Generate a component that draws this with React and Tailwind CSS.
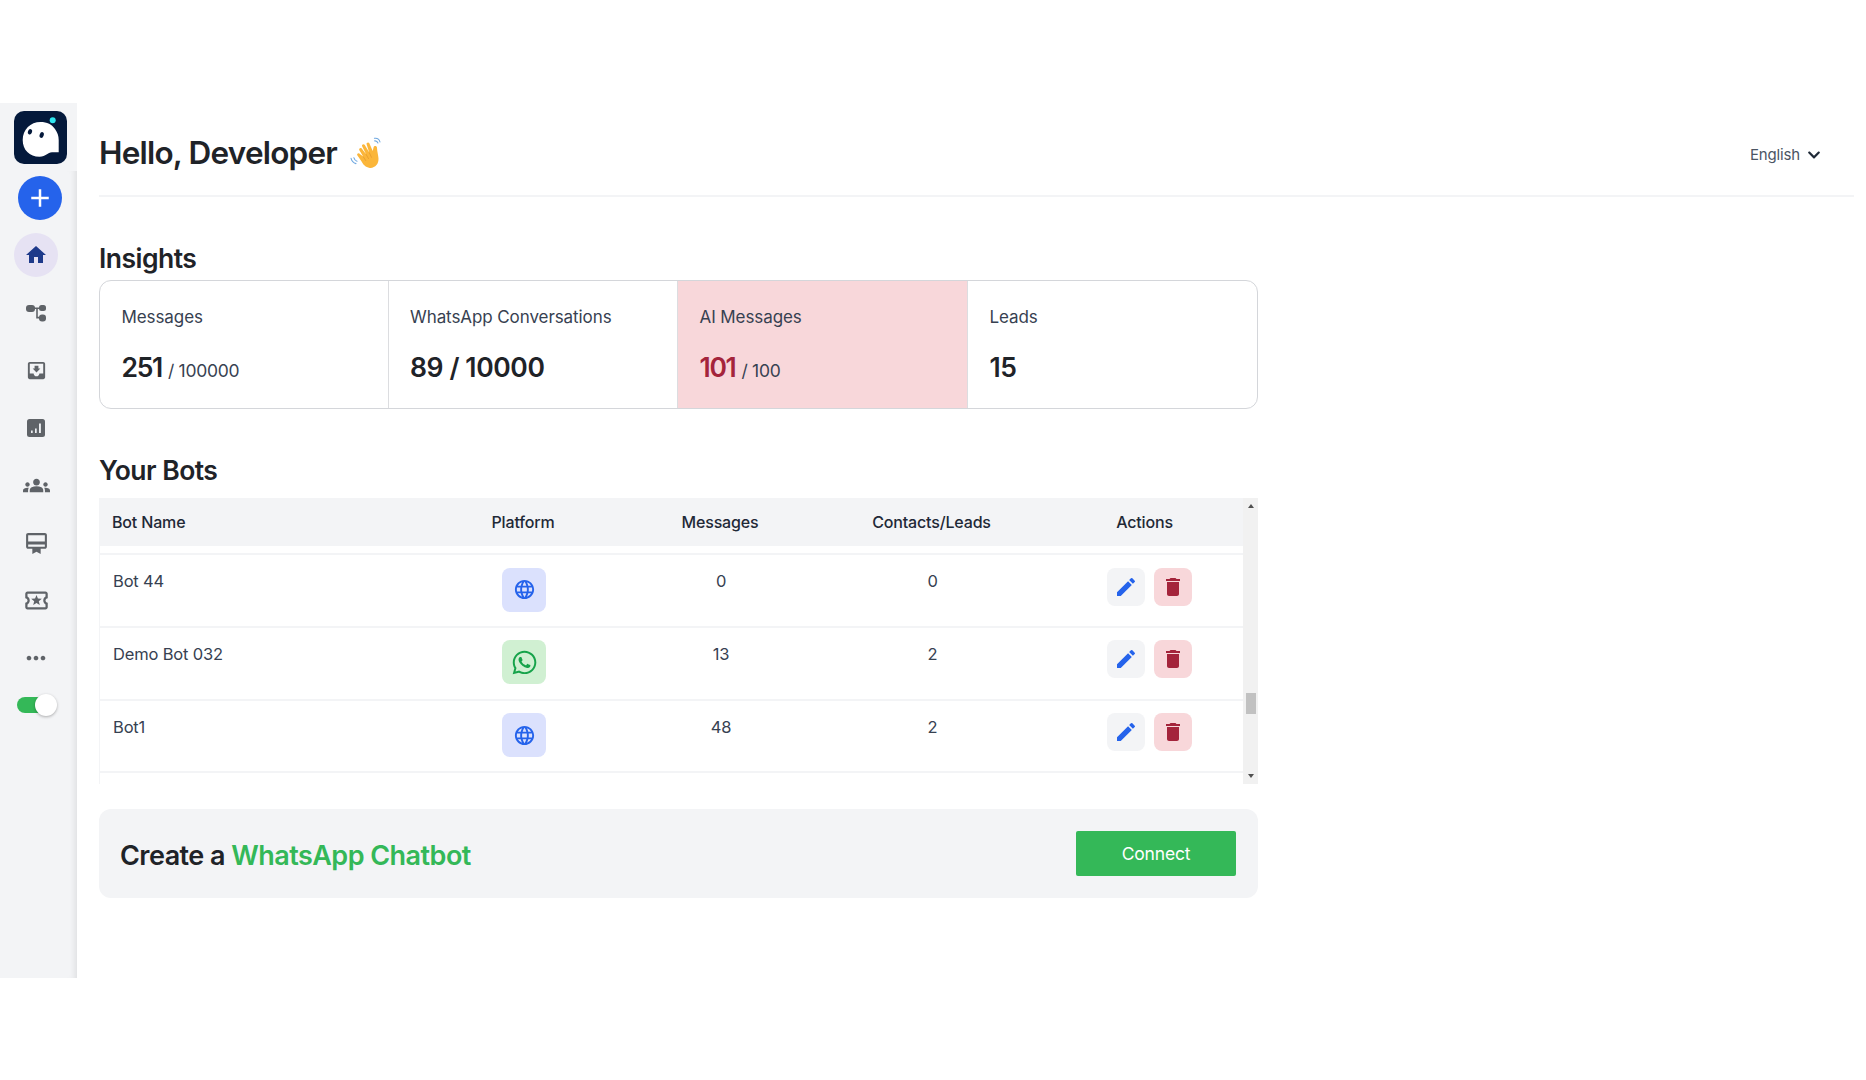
import React from "react";
import { MdHome, MdMoveToInbox, MdGroups, MdCardMembership, MdOutlineLocalActivity, MdMoreHoriz, MdEdit, MdDelete, MdLanguage, MdAdd } from "react-icons/md";
import { FaWhatsapp, FaChevronDown } from "react-icons/fa";

function TreeIcon() {
  return (
    <svg viewBox="0 0 20 18" className="w-[20px] h-[18px] block" fill="#5f6368">
      <rect x="0" y="1" width="9" height="7" rx="3" />
      <rect x="13" y="1" width="7" height="6" rx="2.5" />
      <rect x="13" y="10.5" width="7" height="7" rx="3" />
      <path d="M8 3.4h6v1.6h-6zM10.2 4h1.6v10h-1.6zM10.2 12.8h4v1.6h-4z" />
    </svg>
  );
}

function ChartIcon() {
  return (
    <svg viewBox="0 0 18 18" className="w-[18px] h-[18px] block">
      <rect width="18" height="18" rx="2.5" fill="#5f6368" />
      <rect x="4" y="11.5" width="1.7" height="2.5" fill="#eceef1" />
      <rect x="8" y="9.5" width="1.7" height="4.5" fill="#eceef1" />
      <rect x="12" y="4.5" width="1.9" height="9.5" fill="#eceef1" />
    </svg>
  );
}

const navIcons = [
  <TreeIcon />,
  <MdMoveToInbox className="text-[#5f6368]" size={23} />,
  <ChartIcon />,
  <MdGroups className="text-[#5f6368]" size={27} />,
  <MdCardMembership className="text-[#5f6368]" size={25} />,
  <MdOutlineLocalActivity className="text-[#5f6368]" size={27} />,
  <MdMoreHoriz className="text-[#5f6368]" size={28} />,
];

function Logo() {
  return (
    <svg viewBox="0 0 53 53" className="w-[53px] h-[53px] block">
      <rect width="53" height="53" rx="10" fill="#04193b" />
      <path d="M8.7 29C8.7 18.5 16.5 11 26.5 11C33 11 38 13.5 41 18C43.5 21.5 44.7 25 44.7 29V41.3H38C33.5 41.3 32 45.7 25.5 45.7C15.5 45.7 8.7 39 8.7 29Z" fill="#fff" />
      <ellipse cx="16" cy="20.8" rx="2" ry="2.8" transform="rotate(20 16 20.8)" fill="#04193b" />
      <ellipse cx="27.7" cy="24" rx="2" ry="3" transform="rotate(20 27.7 24)" fill="#04193b" />
      <circle cx="38.7" cy="9.3" r="3" fill="#2ee6f0" />
    </svg>
  );
}

function Wave() {
  return (
    <svg viewBox="0 0 32 32" className="w-[34px] h-[34px] block">
      <g fill="none" stroke="#6fa8e0" strokeWidth="1" strokeLinecap="round">
        <path d="M23 2.2C25.5 1.8 27.5 3.2 28.2 5.6" />
        <path d="M23.2 4.6C24.8 4.4 25.8 5.2 26.3 6.6" />
        <path d="M1 21C1.6 23.5 3.2 25.2 5.6 26" />
        <path d="M3.6 20.4C4 22 5 23.2 6.6 23.8" />
      </g>
      <path fill="#fbb63a" d="M7 18.4C6 17.2 7.6 15.6 9 16.6L12.4 19.4L8.8 13.4C8 12 9.8 10.6 11 11.8L15 17L11.4 9.6C10.8 8 12.8 7 13.8 8.2L18 15.4L15.6 7.8C15.2 6.2 17.4 5.4 18.2 6.8L21.4 14.2L22.2 10.6C22.6 8.8 25.4 9 25.4 11C25.6 15 26.6 17.6 26.8 21C27.2 26.4 23.6 30.4 18.6 30C14.6 29.6 12.4 27 10.6 23.6Z" />
      <path fill="none" stroke="#e0932a" strokeWidth="0.6" d="M15 17L17.6 21.6M18 15.4L20.4 20.4M12.4 19.4L15 23.4" />
    </svg>
  );
}

function Card({ label, value, sub, red, last, width }) {
  return (
    <div className={`${width} pl-[21.5px] pt-[23px] ${red ? "bg-[#f8d7da]" : ""} ${last ? "" : "border-r border-[#dcdde0]"}`}>
      <div className="text-[17px] leading-[26px] text-[#374151] tracking-[-0.005em]">{label}</div>
      <div className="mt-[19px] h-[36px] flex items-baseline">
        <span className={`text-[26.5px] leading-[36px] font-semibold ${sub ? "tracking-[-0.05em]" : "tracking-[-0.015em]"} ${red ? "text-[#a4243b]" : "text-[#1f2328]"}`}>{value}</span>
        {sub && <span className="ml-[6px] text-[17.5px] text-[#374151] tracking-[-0.015em]">{sub}</span>}
      </div>
    </div>
  );
}

const rows = [
  { name: "Bot 44", wa: false, m: "0", c: "0" },
  { name: "Demo Bot 032", wa: true, m: "13", c: "2" },
  { name: "Bot1", wa: false, m: "48", c: "2" },
];

const grid = "grid grid-cols-[324px_200px_194px_229px_197px]";

function Row({ r }) {
  return (
    <div className={`${grid} h-[72.8px] border-t-2 border-[#f3f4f6] text-[16.5px] leading-[24px] text-[#374151] tracking-[-0.01em]`}>
      <div className="pl-[13px] pt-[14px]">{r.name}</div>
      <div className="flex justify-center pt-[12.5px]">
        <div className={`w-[44px] h-[44px] rounded-lg flex items-center justify-center ${r.wa ? "bg-[#d0f0d2]" : "bg-[#dbe1fd]"}`}>
          {r.wa ? <FaWhatsapp className="text-[#16a34a]" size={27} /> : <MdLanguage className="text-[#2563eb]" size={23} />}
        </div>
      </div>
      <div className="text-center pt-[14px]">{r.m}</div>
      <div className="text-center pt-[14px]">{r.c}</div>
      <div className="flex justify-center gap-[9px] pl-[7px] pt-[12.5px]">
        <div className="w-[38px] h-[38px] rounded-lg bg-[#f3f4f6] flex items-center justify-center">
          <MdEdit className="text-[#2563eb]" size={24} />
        </div>
        <div className="w-[38px] h-[38px] rounded-lg bg-[#f8d7da] flex items-center justify-center">
          <MdDelete className="text-[#a4243b]" size={24} />
        </div>
      </div>
    </div>
  );
}

export default function App() {
  return (
    <div className="pt-[103px] bg-white h-[1080px] overflow-hidden font-['Inter',sans-serif] text-[#1f2328]">
      <div className="flex items-start">
        <aside className="w-[77px] h-[875px] shrink-0 bg-[#f3f4f6] flex flex-col">
          <div className="h-[68px] pt-[8px] pl-[14px] shrink-0">
            <Logo />
          </div>
          <div className="flex-1 flex flex-col shadow-[inset_-7px_0_6px_-5px_rgba(0,0,0,0.09)]">
            <div className="mt-[5px] ml-[18px] w-[44px] h-[44px] rounded-full bg-[#2563eb] flex items-center justify-center">
              <MdAdd className="text-white" size={30} />
            </div>
            <div className="mt-[13px] ml-[14px] w-[44px] h-[44px] rounded-full bg-[#e6e2f3] flex items-center justify-center">
              <MdHome className="text-[#1e3a8a]" size={24} />
            </div>
            <div className="mt-[7px] flex flex-col">
              {navIcons.map((icon, i) => (
                <div key={i} className="w-[72px] h-[57.6px] flex items-center justify-center">
                  {icon}
                </div>
              ))}
            </div>
            <div className="mt-[7px] ml-[17px] w-[40px] h-[22px] flex items-center relative">
              <div className="w-[34px] h-[16px] rounded-full bg-[#34b858]" />
              <div className="absolute right-0 top-0 w-[22px] h-[22px] rounded-full bg-white shadow-[0_1px_3px_rgba(0,0,0,0.3)]" />
            </div>
          </div>
        </aside>

        <main className="flex-1 pl-[22px] pr-[12px]">
          <header className="h-[94px] border-b-2 border-[#f3f4f6] flex items-start justify-between pt-[30px]">
            <div className="flex items-center h-[40px]">
              <h1 className="text-[31.5px] leading-[40px] font-semibold tracking-[-0.025em]">Hello, Developer</h1>
              <span className="ml-[13px]"><Wave /></span>
            </div>
            <div className="flex items-center h-[40px] mt-[2px] mr-[33px] text-[#4b5563] text-[15px]">
              <span className="tracking-[-0.01em]">English</span>
              <FaChevronDown className="ml-[7px] text-[#1f2937]" size={14} />
            </div>
          </header>

          <div className="w-[1159px]">
            <h2 className="mt-[43px] mb-[4px] text-[26.5px] leading-[36px] font-semibold tracking-[-0.02em]">Insights</h2>
            <div className="h-[129px] flex border border-[#d4d6da] rounded-xl overflow-hidden">
              <Card width="w-[288.5px]" label="Messages" value="251" sub="/ 100000" />
              <Card width="w-[289.5px]" label="WhatsApp Conversations" value="89 / 10000" />
              <Card width="w-[290px]" label="AI Messages" value="101" sub="/ 100" red />
              <Card width="flex-1" label="Leads" value="15" last />
            </div>

            <h2 className="mt-[43px] mb-[10px] text-[26.5px] leading-[36px] font-semibold tracking-[-0.02em]">Your Bots</h2>
            <div className="flex h-[286px]">
              <div className="w-[1144px] shrink-0 flex flex-col">
                <div className={`${grid} h-[48px] shrink-0 bg-[#f3f4f6] items-center text-[16px] font-medium tracking-[-0.01em] text-[#1f2937]`}>
                  <div className="pl-[13px]">Bot Name</div>
                  <div className="text-center">Platform</div>
                  <div className="text-center">Messages</div>
                  <div className="text-center">Contacts/Leads</div>
                  <div className="text-center">Actions</div>
                </div>
                <div className="flex-1 pt-[7px] border-l border-[#f3f4f6]">
                  {rows.map((r) => <Row key={r.name} r={r} />)}
                  <div className="border-t-2 border-[#f3f4f6]" />
                </div>
              </div>
              <div className="w-[15px] bg-[#f1f1f1] flex flex-col items-center pt-[6px]">
                <div className="w-0 h-0 border-x-[3.5px] border-x-transparent border-b-[4px] border-b-[#505050]" />
                <div className="mt-[185px] w-[10px] h-[21px] bg-[#c1c1c1]" />
                <div className="mt-[60px] w-0 h-0 border-x-[3.5px] border-x-transparent border-t-[4px] border-t-[#505050]" />
              </div>
            </div>

            <div className="mt-[25px] h-[89px] rounded-xl bg-[#f3f4f6] flex items-center justify-between pl-[21px] pr-[22px]">
              <div className="mt-[5px] text-[27px] font-semibold tracking-[-0.02em] text-[#1f2328]">
                Create a <span className="text-[#34b858]">WhatsApp Chatbot</span>
              </div>
              <button className="w-[160px] h-[45px] rounded-[2px] bg-[#34b858] text-white text-[17.5px] tracking-[-0.01em] pt-[1px]">Connect</button>
            </div>
          </div>
        </main>
      </div>
    </div>
  );
}
